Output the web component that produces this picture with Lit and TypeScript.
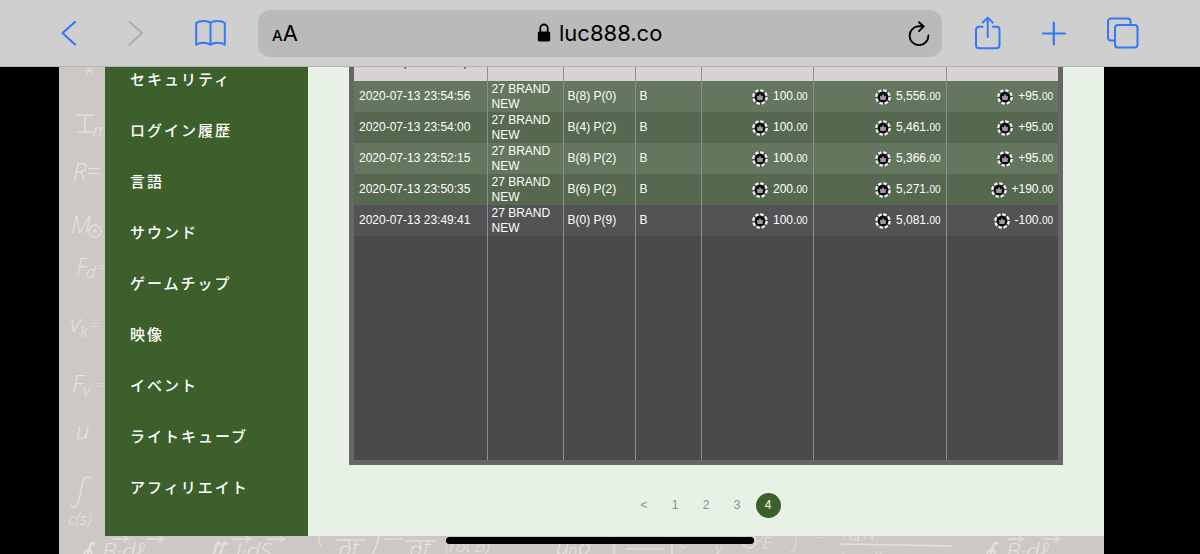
import { LitElement, html, css, svg } from "lit";
import { customElement, state } from "lit/decorators.js";

type Round = {
  time: string;
  table: string;
  result: string;
  bet: string;
  stake: string;
  balance: string;
  change: string;
};

const ROUNDS: Round[] = [
  { time: "2020-07-13 23:54:56", table: "27 BRAND NEW", result: "B(8) P(0)", bet: "B", stake: "100", balance: "5,556", change: "+95" },
  { time: "2020-07-13 23:54:00", table: "27 BRAND NEW", result: "B(4) P(2)", bet: "B", stake: "100", balance: "5,461", change: "+95" },
  { time: "2020-07-13 23:52:15", table: "27 BRAND NEW", result: "B(8) P(2)", bet: "B", stake: "100", balance: "5,366", change: "+95" },
  { time: "2020-07-13 23:50:35", table: "27 BRAND NEW", result: "B(6) P(2)", bet: "B", stake: "200", balance: "5,271", change: "+190" },
  { time: "2020-07-13 23:49:41", table: "27 BRAND NEW", result: "B(0) P(9)", bet: "B", stake: "100", balance: "5,081", change: "-100" },
];

const MENU = [
  "セキュリティ",
  "ログイン履歴",
  "言語",
  "サウンド",
  "ゲームチップ",
  "映像",
  "イベント",
  "ライトキューブ",
  "アフィリエイト",
];

const reset = css`
  button, input {
    appearance: none;
    margin: 0;
    padding: 0;
    border: 0;
    background: none;
    color: inherit;
    font: inherit;
  }
  svg { display: block; }
`;

@customElement("browser-bar")
class BrowserBar extends LitElement {
  static styles = [reset, css`
    :host {
      display: flex;
      align-items: center;
      box-sizing: border-box;
      height: 67px;
      padding: 0 60px 0 61px;
      background: #cfcfcf;
      border-bottom: 1px solid #b4b3b3;
      color: #3478f6;
      font-family: Inter, "Liberation Sans", sans-serif;
    }
    .group { display: flex; align-items: center; }
    .nav { gap: 50px; }
    .tools { gap: 38px; }
    .off { color: #aeaeae; }
    .address {
      flex: 1;
      display: grid;
      grid-template-columns: 1fr auto 1fr;
      align-items: center;
      height: 47px;
      margin: 0 32px 0 31px;
      padding: 0 12px 0 14px;
      box-sizing: border-box;
      border-radius: 12px;
      background: #bababa;
      color: #000;
    }
    .size { justify-self: start; display: flex; align-items: baseline; padding-top: 2px; font-size: 22px; line-height: 28px; }
    .size small { font-size: 15px; font-weight: 500; }
    .site { display: flex; align-items: center; gap: 8px; }
    .site input { width: 106px; height: 28px; font-size: 22px; outline: 0; }
    .reload { justify-self: end; }
  `];

  render() {
    return html`
      <div class="group nav">
        <button aria-label="戻る">
          <svg width="16" height="26" viewBox="0 0 16 26" fill="none" stroke="currentColor" stroke-width="2.200" stroke-linecap="round" stroke-linejoin="round"><path d="M14 2 1.500 13 14 24.500"/></svg>
        </button>
        <button class="off" aria-label="進む" disabled>
          <svg width="16" height="26" viewBox="0 0 16 26" fill="none" stroke="currentColor" stroke-width="2.200" stroke-linecap="round" stroke-linejoin="round"><path d="M2.500 2 15 13 2.500 24.500"/></svg>
        </button>
        <button aria-label="ブックマーク">
          <svg width="34" height="26" viewBox="-1 0 34 26" fill="none" stroke="currentColor" stroke-width="2" stroke-linejoin="round"><path d="M16.500 3.200C14.500.3 5 .3 2.200 3.200V24.800c3.600-2.700 10.700-2.700 14.300 0 3.600-2.700 10.700-2.700 14.300 0V3.200C28 .3 18.500.3 16.500 3.200V24.800"/></svg>
        </button>
      </div>
      <div class="address">
        <button class="size" aria-label="表示設定"><small>A</small><span>A</span></button>
        <label class="site">
          <svg width="14" height="20" viewBox="0 0 14 20"><rect x=".800" y="8.500" width="12.400" height="10" rx="1.600"/><path d="M3.300 9V5.200a3.700 3.700 0 0 1 7.400 0V9" fill="none" stroke="#000" stroke-width="1.800"/></svg>
          <input type="text" aria-label="アドレス" .value=${"luc888.co"} />
        </label>
        <button class="reload" aria-label="再読み込み">
          <svg width="22" height="26" viewBox="0 0 22 26" fill="none" stroke="#000" stroke-width="1.900" stroke-linecap="round" stroke-linejoin="round"><path d="M15.500 6.300H11A9.400 9.400 0 1 0 20.400 15.500M11 2.200l4.700 4.200-4.700 4.700"/></svg>
        </button>
      </div>
      <div class="group tools">
        <button aria-label="共有">
          <svg width="28" height="34" viewBox="0 0 28 34" fill="none" stroke="currentColor" stroke-width="2" stroke-linecap="round" stroke-linejoin="round"><path d="M8.500 10.800H5a3 3 0 0 0-3 3v15.400a3 3 0 0 0 3 3h17.500a3 3 0 0 0 3-3V13.800a3 3 0 0 0-3-3H19M13.700 21V1.800M8.700 6.600l5-5 5 5"/></svg>
        </button>
        <button aria-label="新規タブ">
          <svg width="28" height="26" viewBox="0 0 28 26" fill="none" stroke="currentColor" stroke-width="2.200" stroke-linecap="round"><path d="M2.800 13.500H25M13.800 2.500v22"/></svg>
        </button>
        <button aria-label="タブ一覧">
          <svg width="34" height="32" viewBox="0 0 34 32" fill="none" stroke="currentColor" stroke-width="2" stroke-linejoin="round"><path d="M8.500 23.500H5a3 3 0 0 1-3-3V4.500a3 3 0 0 1 3-3h16.500a3 3 0 0 1 3 3V8"/><rect x="9" y="8" width="22.500" height="22.500" rx="3"/></svg>
        </button>
      </div>
    `;
  }
}

@customElement("chalk-formulas")
class ChalkFormulas extends LitElement {
  static styles = css`
    :host { position: absolute; inset: 0; overflow: hidden; }
    svg { display: block; width: 100%; height: 100%; }
    .ink {
      fill: #e6e3e0;
      font-family: "Open Sans", sans-serif;
      font-style: italic;
      font-weight: 300;
      font-size: 24px;
    }
    .sub { font-size: 17px; }
    .line { fill: none; stroke: #e2dfdc; stroke-width: 1.500; stroke-linecap: round; }
  `;

  render() {
    const glyph = (x: number, y: number, t: string, sub = false) =>
      svg`<text class="ink ${sub ? "sub" : ""}" x=${x} y=${y}>${t}</text>`;
    return html`
      <svg aria-hidden="true">
        ${glyph(27, 8, "k", true)}
        <path class="line" d="M18 48h17M26 48v17M19 65h16"/>
        ${glyph(34, 69, "m", true)}
        ${glyph(14, 113, "R=")}
        ${glyph(12, 166, "M")}
        <circle class="line" cx="36" cy="164" r="6"/><circle class="line" cx="36" cy="164" r="1"/>
        ${glyph(17, 208, "F")} ${glyph(27, 211, "d", true)} ${glyph(38, 206, "=", true)}
        ${glyph(11, 265, "v")} ${glyph(21, 270, "k", true)} ${glyph(31, 264, "=", true)}
        ${glyph(13, 325, "F")} ${glyph(24, 329, "v", true)} ${glyph(37, 324, "=", true)}
        ${glyph(17, 372, "u")}
        <path class="line" d="M32 412c-5-5-8 1-9 7-2 7-2 18-7 21-2 1-4 0-4-3"/>
        ${glyph(9, 458, "c(s)", true)}
        ${glyph(21, 493, "∮")} ${glyph(43, 493, "B·dℓ")}
        <path class="line" d="M54 472h15l-4-3m4 3-4 3M88 472h16l-4-3m4 3-4 3"/>
        ${glyph(147, 493, "∬")} ${glyph(176, 493, "J·dS")}
        <path class="line" d="M174 472h17l-4-3m4 3-4 3M209 472h16l-4-3m4 3-4 3M260 470q-1 6 3 9M278 473h28M320 469q-2 9-6 18M326 472h8M337 472h6M346 474h30"/>
        ${glyph(279, 490, "∂t")} ${glyph(350, 490, "∂t")}
        ${glyph(386, 485, "(rot B)", true)}
        ${glyph(462, 473, "= −", true)}
        ${glyph(497, 488, "μ₀∂")}
        <path class="line" d="M555 469v18M567 482h38M613 469v18"/>
        ${glyph(618, 484, "≈", true)} ${glyph(656, 487, "v", true)}
        <circle class="line" cx="690" cy="474" r="7"/>
        ${glyph(698, 482, "²E", true)} ${glyph(734, 482, "J", true)}
        ${glyph(758, 475, "=", true)} ${glyph(783, 473, "Nₐ·N", true)}
        <path class="line" d="M781 477l112 2"/>
        ${glyph(781, 496, "(n−n)(m", true)}
        ${glyph(924, 493, "∮")} ${glyph(947, 493, "B·dℓ")}
        <path class="line" d="M949 472h15l-4-3m4 3-4 3M984 472h16l-4-3m4 3-4 3"/>
      </svg>
    `;
  }
}

@customElement("side-menu")
class SideMenu extends LitElement {
  static styles = css`
    :host {
      display: flex;
      flex-direction: column;
      justify-content: flex-end;
      box-sizing: border-box;
      width: 203px;
      padding-bottom: 24px;
      background: #3c5f2b;
      overflow: hidden;
    }
    a {
      flex: none;
      padding: 0 25px;
      color: #fff;
      font: 500 15px/51px "Noto Sans CJK JP", sans-serif;
      letter-spacing: 2px;
      text-decoration: none;
    }
  `;

  render() {
    return MENU.map((label) => html`<a href="#">${label}</a>`);
  }
}

@customElement("chip-amount")
class ChipAmount extends LitElement {
  static properties = { value: { type: String } };
  declare value: string;

  static styles = css`
    :host { display: flex; align-items: center; justify-content: flex-end; gap: 5px; }
    svg { display: block; flex: none; }
    small { font-size: 10px; }
  `;

  render() {
    return html`
      <svg width="16" height="16" viewBox="0 0 16 16" aria-hidden="true">
        <circle cx="8" cy="8" r="7.700" fill="#4a4a4a"/>
        <circle cx="8" cy="8" r="6.700" fill="none" stroke="#fafafa" stroke-width="2.300" stroke-dasharray="3.600 1.662"/>
        <circle cx="8" cy="8" r="5.200" fill="#0c0b0e"/>
        <path d="M4.800 6.500l1.700 1L8 4.800l1.500 2.700 1.700-1-.7 4.500h-5z" fill="#a29aa2"/>
      </svg>
      <span>${this.value}.<small>00</small></span>
    `;
  }
}

@customElement("bet-history")
class BetHistory extends LitElement {
  static styles = css`
    :host { display: block; border: 5px solid #666; background: #4a4b48; }
    table {
      width: 100%;
      table-layout: fixed;
      border-collapse: collapse;
      color: #fff;
      font-size: 12px;
      line-height: 15px;
    }
    .c-time { width: 133px; }
    .c-table { width: 76px; }
    .c-result { width: 72px; }
    .c-bet { width: 66px; }
    .c-stake { width: 112px; }
    .c-balance { width: 133px; }
    .c-change { width: 112px; }
    th, td { padding: 0 5px 0 4px; border-left: 1px solid #8c8f8b; text-align: left; font-weight: 400; }
    th:first-child, td:first-child { padding-left: 5px; border-left: 0; }
    th { height: 40px; padding-bottom: 11px; vertical-align: bottom; box-sizing: border-box; background: #d8d3d2; color: #222; text-align: center; white-space: nowrap; }
    td { height: 31px; }
    .win:nth-child(odd) td { background: #64765e; }
    .win:nth-child(even) td { background: #56684f; }
    .loss td { background: #535254; }
    .rest td { height: 224px; background: #4a4b48; }
  `;

  render() {
    return html`
      <table>
        <colgroup>
          <col class="c-time" /><col class="c-table" /><col class="c-result" /><col class="c-bet" />
          <col class="c-stake" /><col class="c-balance" /><col class="c-change" />
        </colgroup>
        <thead>
          <tr><th>Time (GMT+9:00)</th><th></th><th></th><th></th><th></th><th></th><th></th></tr>
        </thead>
        <tbody>
          ${ROUNDS.map((r) => html`
            <tr class=${r.change.startsWith("+") ? "win" : "loss"}>
              <td>${r.time}</td>
              <td>${r.table}</td>
              <td>${r.result}</td>
              <td>${r.bet}</td>
              <td><chip-amount .value=${r.stake}></chip-amount></td>
              <td><chip-amount .value=${r.balance}></chip-amount></td>
              <td><chip-amount .value=${r.change}></chip-amount></td>
            </tr>`)}
          <tr class="rest"><td></td><td></td><td></td><td></td><td></td><td></td><td></td></tr>
        </tbody>
      </table>
    `;
  }
}

@customElement("page-links")
class PageLinks extends LitElement {
  @state() current = "4";

  static styles = [reset, css`
    :host { display: flex; justify-content: center; gap: 6px; }
    button {
      width: 25px;
      height: 25px;
      border-radius: 50%;
      color: #868d85;
      font-size: 12px;
      line-height: 25px;
      text-align: center;
    }
    .current { background: #3c5f2b; color: #fff; }
  `];

  render() {
    return ["<", "1", "2", "3", "4"].map((p) => html`
      <button
        class=${p === this.current ? "current" : ""}
        @click=${() => { if (p !== "<") this.current = p; }}
      >${p}</button>`);
  }
}

@customElement("app-root")
class AppRoot extends LitElement {
  static styles = css`
    :host {
      display: flex;
      flex-direction: column;
      position: relative;
      height: 100vh;
      overflow: hidden;
      background: #000;
      font-family: "Liberation Sans", Arial, "Noto Sans CJK JP", sans-serif;
    }
    browser-bar { flex: none; }
    .page {
      position: relative;
      flex: 1;
      min-height: 0;
      display: flex;
      margin: 0 96px 0 59px;
      padding: 0 0 18px 46px;
      background: #cdc8c6;
    }
    .stage { position: relative; flex: 1; min-width: 0; display: flex; background: #e8f1e6; }
    side-menu { flex: none; }
    main {
      flex: 1;
      min-width: 0;
      display: flex;
      flex-direction: column;
      justify-content: flex-end;
      gap: 28px;
      padding: 0 41px 18px;
      overflow: hidden;
    }
    main > * { flex: none; }
    .home-indicator {
      position: absolute;
      bottom: 10px;
      left: 50%;
      width: 308px;
      height: 7px;
      margin-left: -154px;
      border-radius: 4px;
      background: #000;
    }
  `;

  render() {
    return html`
      <browser-bar></browser-bar>
      <div class="page">
        <chalk-formulas></chalk-formulas>
        <div class="stage">
          <side-menu></side-menu>
          <main>
            <bet-history></bet-history>
            <page-links></page-links>
          </main>
        </div>
      </div>
      <div class="home-indicator"></div>
    `;
  }
}
